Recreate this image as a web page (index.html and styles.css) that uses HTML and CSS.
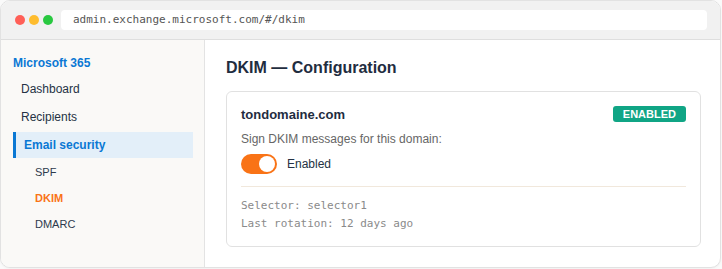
FILE: index.html
```html
<!DOCTYPE html>
<html>
<head>
<meta charset="utf-8">
<link rel="stylesheet" href="styles.css">
</head>
<body>
<div class="window">
  <div class="titlebar">
    <div class="dots">
      <span class="dot red"></span>
      <span class="dot yellow"></span>
      <span class="dot green"></span>
    </div>
    <div class="url">admin.exchange.microsoft.com/#/dkim</div>
  </div>
  <div class="body">
    <aside class="sidebar">
      <div class="brand">Microsoft 365</div>
      <nav class="nav">
        <div class="nav-item">Dashboard</div>
        <div class="nav-item">Recipients</div>
        <div class="nav-item active">Email security</div>
      </nav>
      <div class="subnav">
        <div class="sub-item">SPF</div>
        <div class="sub-item current">DKIM</div>
        <div class="sub-item">DMARC</div>
      </div>
    </aside>
    <main class="main">
      <h1 class="title">DKIM — Configuration</h1>
      <section class="card">
        <div class="card-head">
          <div class="domain">tondomaine.com</div>
          <span class="badge">ENABLED</span>
        </div>
        <div class="desc">Sign DKIM messages for this domain:</div>
        <div class="toggle-row">
          <span class="toggle"><span class="knob"></span></span>
          <span class="toggle-label">Enabled</span>
        </div>
        <div class="meta">
          <div>Selector: selector1</div>
          <div>Last rotation: 12 days ago</div>
        </div>
      </section>
    </main>
  </div>
</div>
</body>
</html>
```
FILE: styles.css
```css
* { box-sizing: border-box; }
html, body { margin: 0; padding: 0; }
body {
  background: #fafafa;
  font-family: "Liberation Sans", Arial, sans-serif;
  width: 722px;
  height: 269px;
  overflow: hidden;
}
.window {
  width: 721px;
  height: 268px;
  border: 1px solid #e2e2e2;
  border-radius: 10px;
  overflow: hidden;
  background: #fff;
  display: flex;
  flex-direction: column;
  box-shadow: 0 1px 2px rgba(0,0,0,0.04);
}
.titlebar {
  height: 38px;
  flex: none;
  background: #f1f1f1;
  border-bottom: 1px solid #dedede;
  display: flex;
  align-items: center;
  padding: 0 13px 0 14px;
  box-sizing: content-box;
}
.dots { display: flex; gap: 4px; margin-right: 8px; }
.dot { width: 10px; height: 10px; border-radius: 50%; display: block; }
.red { background: #ff5f57; }
.yellow { background: #febc2e; }
.green { background: #28c840; }
.url {
  flex: 1;
  height: 20px;
  background: #fff;
  border-radius: 4px;
  font-family: "DejaVu Sans Mono", monospace;
  font-size: 11px;
  color: #555;
  line-height: 20px;
  padding-left: 12px;
}
.body { flex: 1; display: flex; min-height: 0; }
.sidebar {
  width: 204px;
  flex: none;
  background: #faf9f7;
  border-right: 1px solid #e3e3e3;
  padding: 15px 11px 0 12px;
}
.brand {
  font-size: 12px;
  font-weight: bold;
  color: #0a78d4;
  line-height: 16px;
  margin-bottom: 5px;
}
.nav { display: flex; flex-direction: column; gap: 2px; }
.nav-item {
  height: 26px;
  line-height: 26px;
  font-size: 12px;
  color: #253244;
  padding-left: 8px;
}
.nav-item.active {
  background: #e3eff9;
  border-left: 3px solid #0a78d4;
  color: #0a78d4;
  font-weight: bold;
}
.subnav { display: flex; flex-direction: column; margin-top: 1px; }
.sub-item {
  height: 26px;
  line-height: 26px;
  font-size: 11px;
  color: #2d3a4c;
  padding-left: 22px;
}
.sub-item.current { color: #f97316; font-weight: bold; }
.main {
  flex: 1;
  padding: 18px 19px 0 21px;
}
.title {
  margin: 0 0 13px 0;
  font-size: 16px;
  line-height: 20px;
  font-weight: bold;
  color: #1f2d3f;
}
.card {
  border: 1px solid #e1e1e1;
  border-radius: 6px;
  padding: 14px 14px 13px 14px;
}
.card-head {
  display: flex;
  justify-content: space-between;
  align-items: center;
  height: 16px;
}
.domain { font-size: 13px; font-weight: bold; color: #1f2d3f; }
.badge {
  background: #10a585;
  color: #fff;
  font-size: 11px;
  font-weight: bold;
  line-height: 16px;
  height: 16px;
  padding: 0 10px;
  border-radius: 3px;
}
.desc {
  margin-top: 9px;
  font-size: 12px;
  line-height: 16px;
  color: #666;
}
.toggle-row {
  margin-top: 7px;
  display: flex;
  align-items: center;
  gap: 10px;
}
.toggle {
  width: 36px;
  height: 20px;
  border-radius: 10px;
  background: #f97316;
  display: flex;
  justify-content: flex-end;
  align-items: center;
  padding: 2px;
}
.knob { width: 16px; height: 16px; border-radius: 50%; background: #fff; display: block; }
.toggle-label { font-size: 12px; color: #253244; }
.meta {
  margin-top: 12px;
  border-top: 1px solid #f1e8dc;
  padding-top: 10px;
  font-family: "DejaVu Sans Mono", monospace;
  font-size: 11px;
  line-height: 18px;
  color: #8a8a8a;
}
```
